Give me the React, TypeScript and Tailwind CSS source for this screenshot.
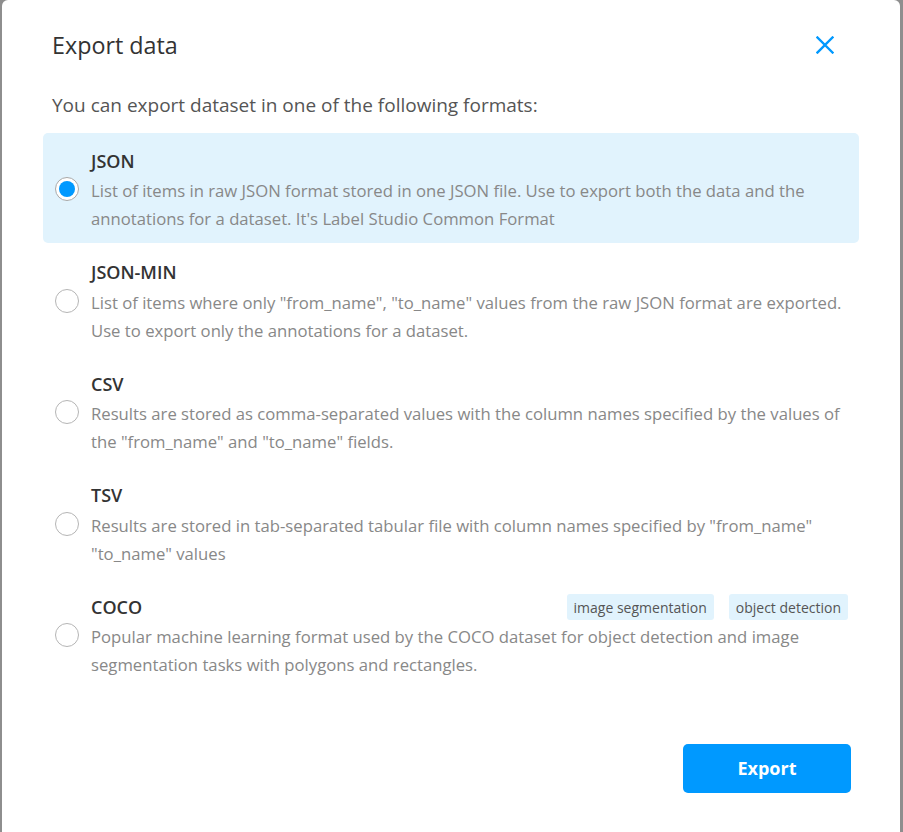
import React, { useState } from "react";

type Opt = { id: string; title: string; desc: string; tags?: string[] };

const OPTIONS: Opt[] = [
  {
    id: "JSON",
    title: "JSON",
    desc: "List of items in raw JSON format stored in one JSON file. Use to export both the data and the annotations for a dataset. It's Label Studio Common Format",
  },
  {
    id: "JSON_MIN",
    title: "JSON-MIN",
    desc: 'List of items where only "from_name", "to_name" values from the raw JSON format are exported. Use to export only the annotations for a dataset.',
  },
  {
    id: "CSV",
    title: "CSV",
    desc: 'Results are stored as comma-separated values with the column names specified by the values of the "from_name" and "to_name" fields.',
  },
  {
    id: "TSV",
    title: "TSV",
    desc: 'Results are stored in tab-separated tabular file with column names specified by "from_name" "to_name" values',
  },
  {
    id: "COCO",
    title: "COCO",
    desc: "Popular machine learning format used by the COCO dataset for object detection and image segmentation tasks with polygons and rectangles.",
    tags: ["image segmentation", "object detection"],
  },
];

function Radio({ checked }: { checked: boolean }) {
  return (
    <div
      className={
        "w-[24px] h-[24px] rounded-full border flex items-center justify-center shrink-0 bg-white " +
        (checked ? "border-[#a8a8a8]" : "border-[#b5b5b5]")
      }
    >
      {checked && <div className="w-[16px] h-[16px] rounded-full bg-[#0099ff]" />}
    </div>
  );
}

export default function App() {
  const [sel, setSel] = useState("JSON");
  return (
    <div
      className="h-[832px] w-full overflow-hidden bg-[#8e8e8e] pl-[2px] pr-[3px]"
      style={{ fontFamily: '"Open Sans", "Noto Sans", sans-serif' }}
    >
      <div className="bg-white rounded-t-[6px] h-[860px] px-[41px]">
        <div className="flex items-center justify-between pl-[9px] pr-[24px] pt-[30px]">
          <h2 className="text-[23.3px] leading-[30px] text-[#333] font-normal">Export data</h2>
          <button className="w-[20px] h-[20px] flex items-center justify-center">
            <svg width="18" height="18" viewBox="0 0 18 18" fill="none">
              <path d="M1.5 1.5 L16.5 16.5 M16.5 1.5 L1.5 16.5" stroke="#0099ff" strokeWidth="2.4" strokeLinecap="square" />
            </svg>
          </button>
        </div>
        <p className="pl-[9px] mt-[31px] text-[19px] leading-[28px] text-[#555]">
          You can export dataset in one of the following formats:
        </p>
        <div className="mt-[14px] flex flex-col gap-[1.5px]">
          {OPTIONS.map((o) => {
            const checked = sel === o.id;
            return (
              <div
                key={o.id}
                onClick={() => setSel(o.id)}
                className={
                  "flex gap-[12px] pl-[12px] pr-[11px] pt-[12px] pb-[10px] rounded-[5px] cursor-pointer " +
                  (checked ? "bg-[#e1f3fd]" : "bg-white")
                }
              >
                <div className="pt-[32px]">
                  <Radio checked={checked} />
                </div>
                <div className="flex-1 min-w-0">
                  <div className="flex items-center justify-between h-[32px]">
                    <div className="text-[18px] font-semibold text-[#333]">{o.title}</div>
                    {o.tags && (
                      <div className="flex gap-[15px]">
                        {o.tags.map((t) => (
                          <span
                            key={t}
                            className="h-[26px] px-[7px] flex items-center rounded-[3px] bg-[#e1f3fd] text-[14px] text-[#555]"
                          >
                            {t}
                          </span>
                        ))}
                      </div>
                    )}
                  </div>
                  <div className="text-[16.7px] leading-[28px] text-[#888] h-[56px]">{o.desc}</div>
                </div>
              </div>
            );
          })}
        </div>
        <div className="flex justify-end pr-[8px] mt-[55px]">
          <button className="w-[168px] h-[49px] rounded-[5px] bg-[#0099ff] text-white text-[18px] font-bold">
            Export
          </button>
        </div>
      </div>
    </div>
  );
}
